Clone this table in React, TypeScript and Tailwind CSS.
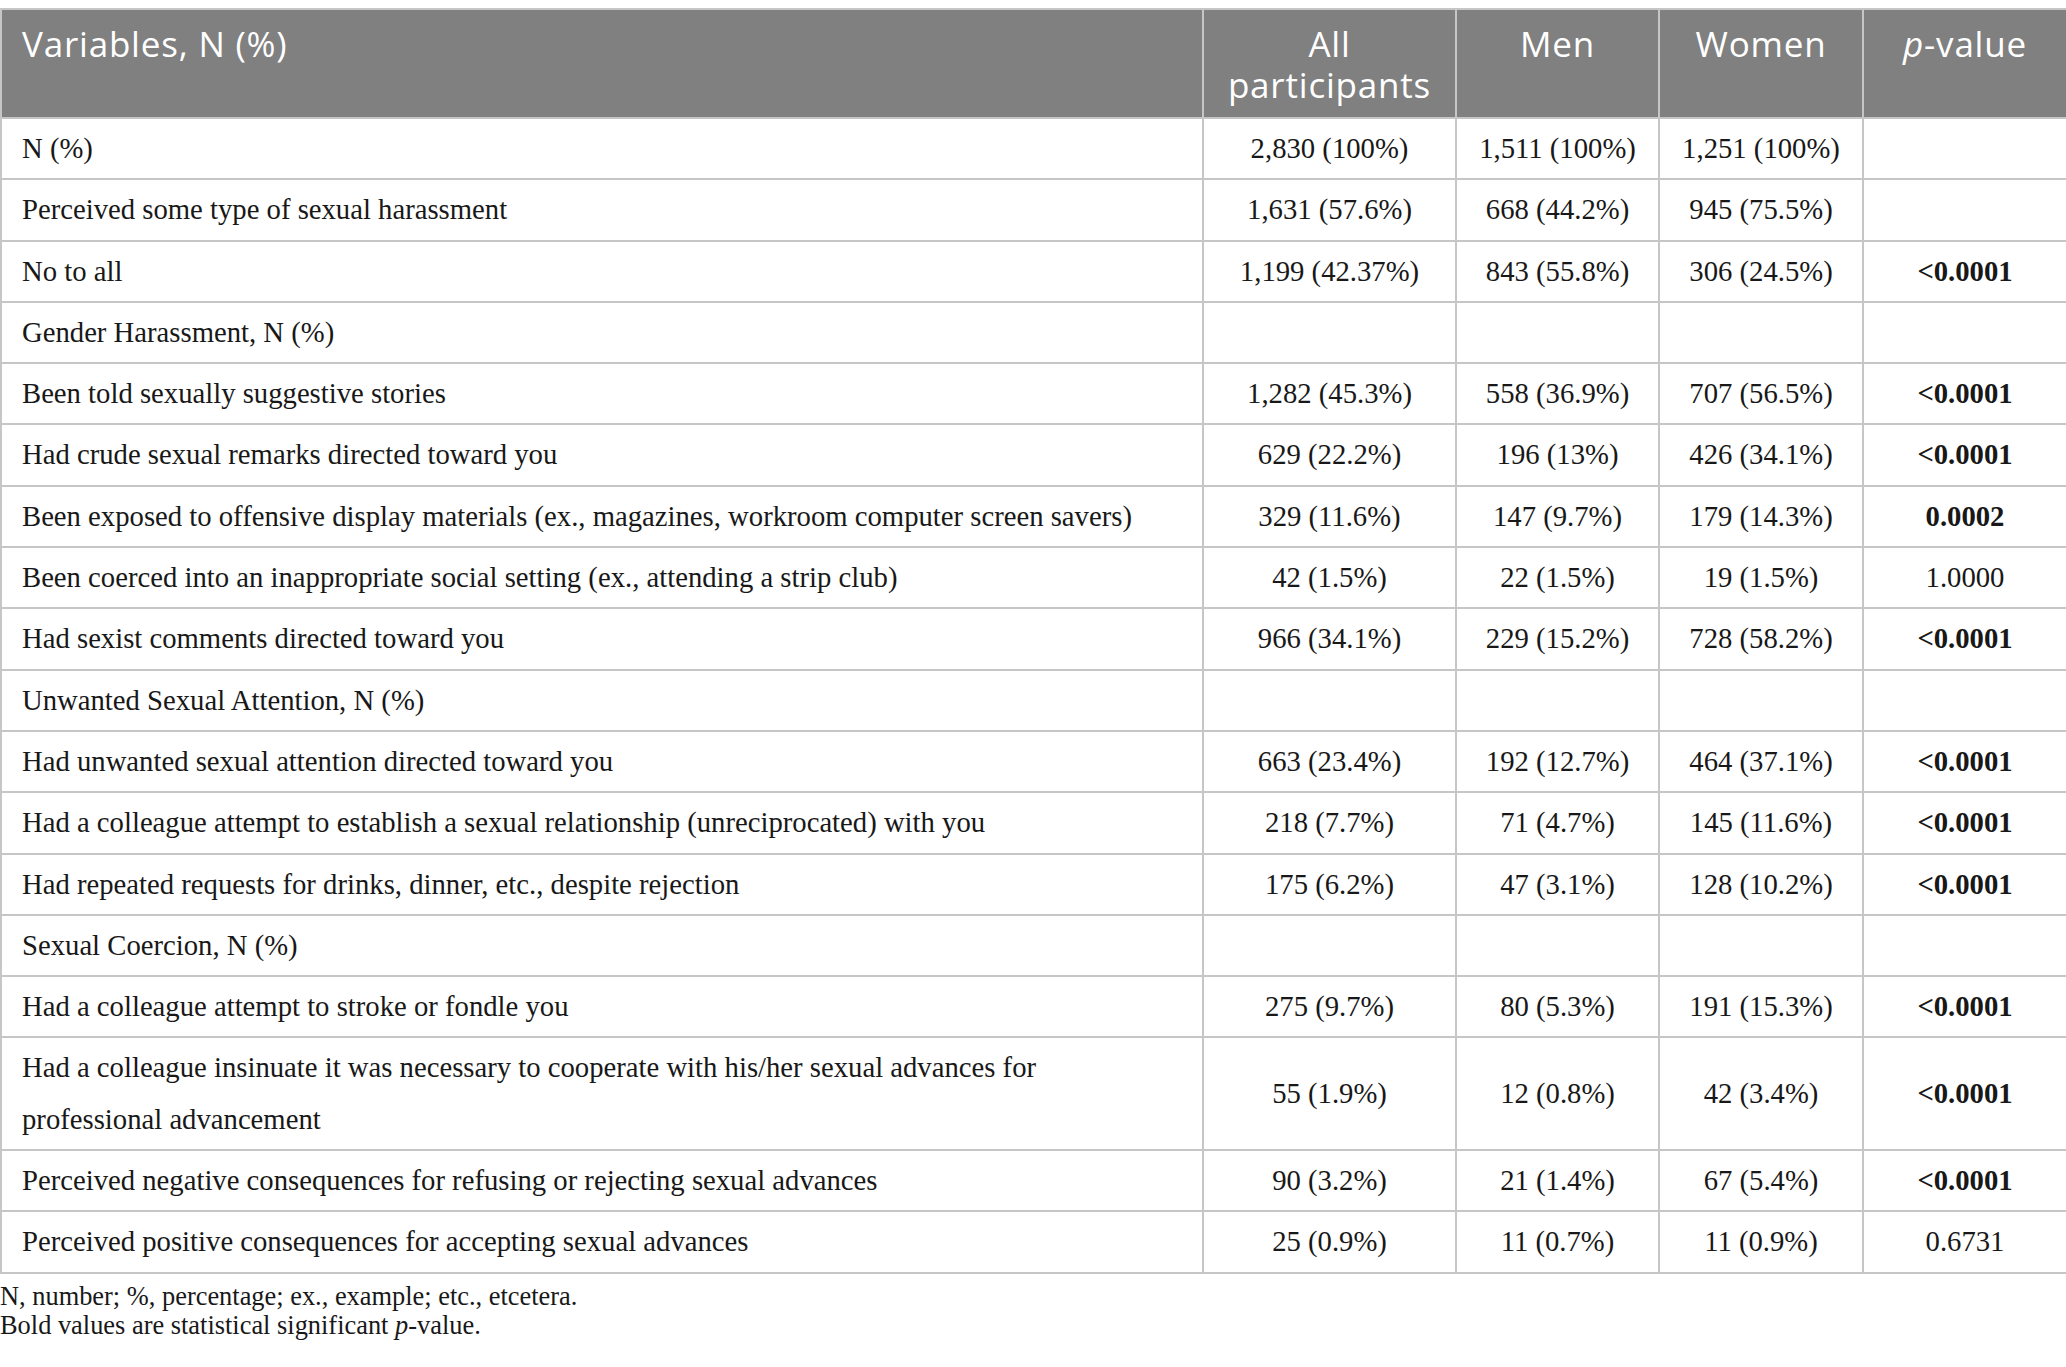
import React from 'react';

type Row = {
  label: React.ReactNode;
  all?: string;
  men?: string;
  women?: string;
  p?: string;
  bold?: boolean;
};

const rows: Row[] = [
  { label: 'N (%)', all: '2,830 (100%)', men: '1,511 (100%)', women: '1,251 (100%)' },
  { label: 'Perceived some type of sexual harassment', all: '1,631 (57.6%)', men: '668 (44.2%)', women: '945 (75.5%)' },
  { label: 'No to all', all: '1,199 (42.37%)', men: '843 (55.8%)', women: '306 (24.5%)', p: '<0.0001', bold: true },
  { label: 'Gender Harassment, N (%)' },
  { label: 'Been told sexually suggestive stories', all: '1,282 (45.3%)', men: '558 (36.9%)', women: '707 (56.5%)', p: '<0.0001', bold: true },
  { label: 'Had crude sexual remarks directed toward you', all: '629 (22.2%)', men: '196 (13%)', women: '426 (34.1%)', p: '<0.0001', bold: true },
  {
    label: 'Been exposed to offensive display materials (ex., magazines, workroom computer screen savers)',
    all: '329 (11.6%)',
    men: '147 (9.7%)',
    women: '179 (14.3%)',
    p: '0.0002',
    bold: true,
  },
  {
    label: 'Been coerced into an inappropriate social setting (ex., attending a strip club)',
    all: '42 (1.5%)',
    men: '22 (1.5%)',
    women: '19 (1.5%)',
    p: '1.0000',
  },
  { label: 'Had sexist comments directed toward you', all: '966 (34.1%)', men: '229 (15.2%)', women: '728 (58.2%)', p: '<0.0001', bold: true },
  { label: 'Unwanted Sexual Attention, N (%)' },
  { label: 'Had unwanted sexual attention directed toward you', all: '663 (23.4%)', men: '192 (12.7%)', women: '464 (37.1%)', p: '<0.0001', bold: true },
  {
    label: 'Had a colleague attempt to establish a sexual relationship (unreciprocated) with you',
    all: '218 (7.7%)',
    men: '71 (4.7%)',
    women: '145 (11.6%)',
    p: '<0.0001',
    bold: true,
  },
  {
    label: 'Had repeated requests for drinks, dinner, etc., despite rejection',
    all: '175 (6.2%)',
    men: '47 (3.1%)',
    women: '128 (10.2%)',
    p: '<0.0001',
    bold: true,
  },
  { label: 'Sexual Coercion, N (%)' },
  { label: 'Had a colleague attempt to stroke or fondle you', all: '275 (9.7%)', men: '80 (5.3%)', women: '191 (15.3%)', p: '<0.0001', bold: true },
  {
    label: (
      <>
        Had a colleague insinuate it was necessary to cooperate with his/her sexual advances for
        <br />
        professional advancement
      </>
    ),
    all: '55 (1.9%)',
    men: '12 (0.8%)',
    women: '42 (3.4%)',
    p: '<0.0001',
    bold: true,
  },
  {
    label: 'Perceived negative consequences for refusing or rejecting sexual advances',
    all: '90 (3.2%)',
    men: '21 (1.4%)',
    women: '67 (5.4%)',
    p: '<0.0001',
    bold: true,
  },
  {
    label: 'Perceived positive consequences for accepting sexual advances',
    all: '25 (0.9%)',
    men: '11 (0.7%)',
    women: '11 (0.9%)',
    p: '0.6731',
  },
];

const headCell = 'border-2 border-[#c6c6c6] px-[20px] pt-[13px] pb-[12px] align-top font-normal text-white';
const bodyCell = 'border-2 border-[#c6c6c6] px-[20px] py-1 align-middle';

export default function App() {
  return (
    <div className="min-h-screen w-[2066px] bg-white pt-2 font-['Liberation_Serif',serif] text-[#181818]">
      <table className="w-[2066px] table-fixed border-collapse">
        <colgroup>
          <col className="w-[1202px]" />
          <col className="w-[253px]" />
          <col className="w-[203px]" />
          <col className="w-[204px]" />
          <col className="w-[204px]" />
        </colgroup>
        <thead>
          <tr className="bg-[#7f807f] font-['Open_Sans',sans-serif] text-[35px] leading-[41px] tracking-[0.8px]">
            <th className={`${headCell} text-left`}>Variables, N (%)</th>
            <th className={`${headCell} text-center`}>
              All
              <br />
              participants
            </th>
            <th className={`${headCell} text-center`}>Men</th>
            <th className={`${headCell} text-center`}>Women</th>
            <th className={`${headCell} text-center`}>
              <span className="italic">p</span>-value
            </th>
          </tr>
        </thead>
        <tbody className="text-[28.7px] leading-[51.3px]">
          {rows.map((row, i) => (
            <tr key={i}>
              <td className={`${bodyCell} text-left`}>{row.label}</td>
              <td className={`${bodyCell} text-center`}>{row.all}</td>
              <td className={`${bodyCell} text-center`}>{row.men}</td>
              <td className={`${bodyCell} text-center`}>{row.women}</td>
              <td className={`${bodyCell} text-center ${row.bold ? 'font-bold' : ''}`}>{row.p}</td>
            </tr>
          ))}
        </tbody>
      </table>
      <div className="mt-[8px] text-[26.4px] leading-[29px]">
        <p>N, number; %, percentage; ex., example; etc., etcetera.</p>
        <p>
          Bold values are statistical significant <span className="italic">p</span>-value.
        </p>
      </div>
    </div>
  );
}
